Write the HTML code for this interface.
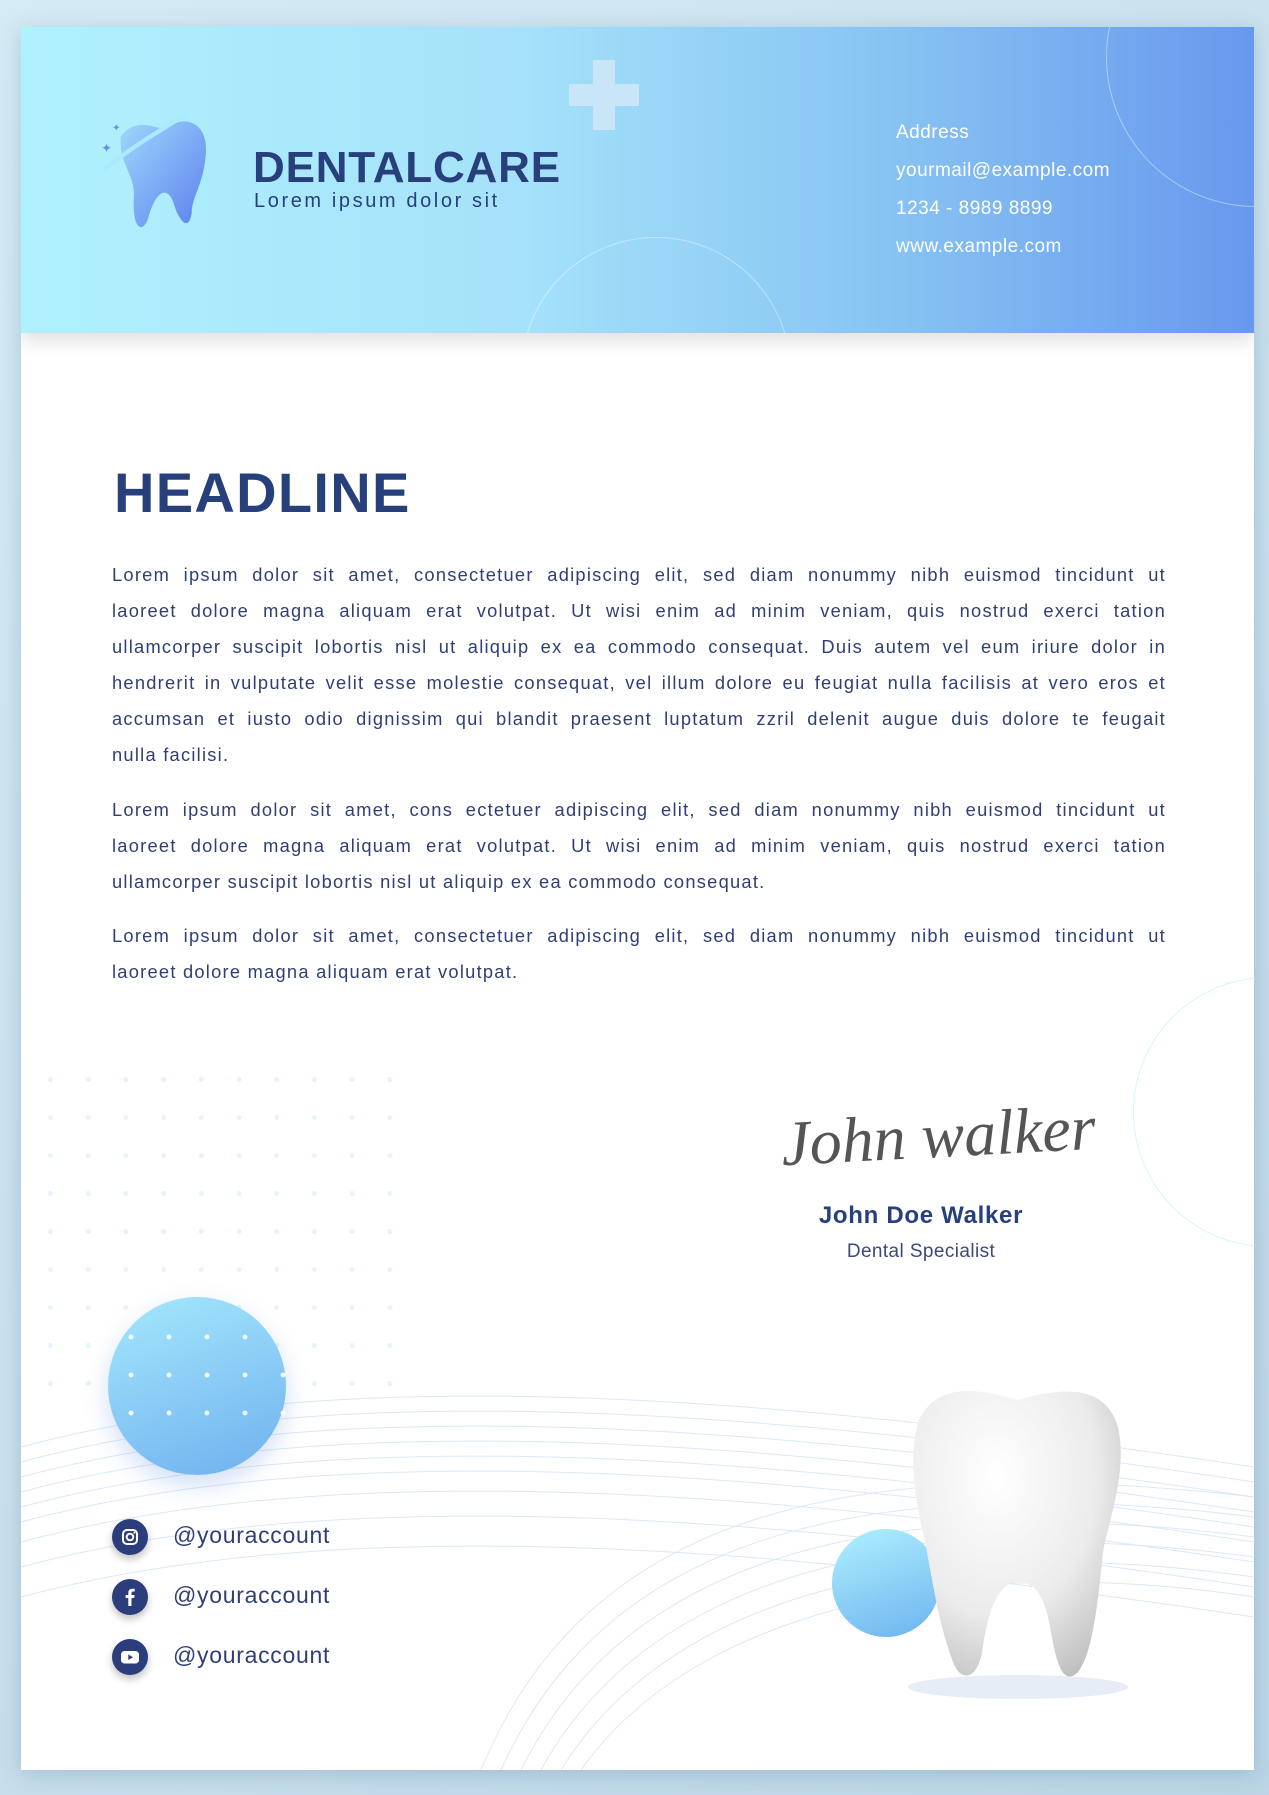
<!DOCTYPE html>
<html><head><meta charset="utf-8"><style>
*{margin:0;padding:0;box-sizing:border-box}
body{width:1269px;height:1795px;background:linear-gradient(135deg,#d5ebf5,#bcd6e6);position:relative;overflow:hidden;font-family:"Liberation Sans",sans-serif;color:#2b3d74}
.page{position:absolute;left:21px;top:27px;width:1233px;height:1743px;background:#fff;box-shadow:0 4px 20px rgba(80,120,160,.3);overflow:hidden}
.hdr{position:absolute;left:0;top:0;width:1233px;height:306px;background:linear-gradient(90deg,#b0f1fe 0%,#a5e2fa 40%,#88c4f2 70%,#6798ee 100%);box-shadow:0 8px 18px rgba(0,0,0,.12);overflow:hidden}
.p{position:absolute;left:91px;width:1054px;font-size:18.3px;line-height:36px;color:#2f3f75;letter-spacing:1.25px}
.p div{text-align:justify;text-align-last:justify;white-space:nowrap}
.p div.l{text-align-last:left}
.contact{position:absolute;left:875px;top:87px;color:#fff;font-size:19px;line-height:38px;letter-spacing:.5px}
.soc{position:absolute;left:91px;width:36px;height:36px;border-radius:50%;background:#2b3d7a;box-shadow:0 4px 8px rgba(0,0,0,.25)}
.st{position:absolute;left:152px;font-size:23px;color:#2f3f75;letter-spacing:.7px}
</style></head><body>
<div class="page">
<svg style="position:absolute;left:0;top:1300px" width="1233" height="443" viewBox="0 0 1233 443">
<g fill="none" stroke="#dce8f6" stroke-width="1">
<path d="M0 120 C300 40 700 60 1233 140"/><path d="M0 135 C300 55 700 75 1233 155"/><path d="M0 150 C300 70 700 90 1233 170"/><path d="M0 165 C300 85 700 105 1233 185"/><path d="M0 180 C300 100 700 120 1233 200"/><path d="M0 195 C300 115 700 135 1233 215"/><path d="M0 215 C300 135 700 155 1233 235"/><path d="M0 240 C300 160 700 180 1233 260"/><path d="M0 270 C300 190 700 210 1233 290"/>
<path d="M460 443 C560 200 800 120 1233 170"/><path d="M480 443 C580 220 820 140 1233 190"/><path d="M500 443 C600 240 840 160 1233 210"/><path d="M520 443 C620 260 860 180 1233 230"/><path d="M540 443 C640 280 880 200 1233 250"/><path d="M560 443 C660 300 900 220 1233 270"/>
</g></svg>
<div class="hdr">
<div style="position:absolute;left:548px;top:57px;width:70px;height:22px;background:#c8e6f8"></div>
<div style="position:absolute;left:572px;top:33px;width:22px;height:70px;background:#c8e6f8"></div>
<div style="position:absolute;left:500px;top:210px;width:270px;height:270px;border-radius:50%;border:1px solid rgba(255,255,255,.4)"></div>
<div style="position:absolute;left:1085px;top:-120px;width:300px;height:300px;border-radius:50%;border:1px solid rgba(255,255,255,.4)"></div>
<svg style="position:absolute;left:78px;top:80px" width="120" height="135" viewBox="0 0 110 120">
<defs><linearGradient id="tg" x1="0" y1="0" x2="1" y2="1"><stop offset="0" stop-color="#9ed8fb"/><stop offset="1" stop-color="#5d80ef"/></linearGradient></defs>
<path d="M20 25 C35 5 55 20 62 18 C75 5 100 10 98 40 C96 70 85 80 85 95 C82 115 72 100 68 85 C62 70 52 75 45 100 C40 115 30 110 32 80 C33 60 18 50 20 25Z" fill="url(#tg)"/>
<path d="M5 55 C30 35 55 20 80 5" stroke="#a9eafd" stroke-width="4" fill="none"/>
<text x="2" y="40" fill="#6a8fe8" font-size="12">✦</text><text x="12" y="20" fill="#6a8fe8" font-size="9">✦</text>
</svg>
<div style="position:absolute;left:232px;top:116px;font-size:44px;font-weight:bold;color:#27407c;letter-spacing:.8px">DENTALCARE</div>
<div style="position:absolute;left:233px;top:163px;font-size:20px;color:#27407c;letter-spacing:2.6px">Lorem ipsum dolor sit</div>
<div class="contact">Address<br>yourmail@example.com<br>1234 - 8989 8899<br>www.example.com</div>
</div>
<div style="position:absolute;left:93px;top:433px;font-size:56px;font-weight:bold;color:#27407c;letter-spacing:1.3px">HEADLINE</div>
<div class="p" style="top:530px">
<div>Lorem ipsum dolor sit amet, consectetuer adipiscing elit, sed diam nonummy nibh euismod tincidunt ut</div>
<div>laoreet dolore magna aliquam erat volutpat. Ut wisi enim ad minim veniam, quis nostrud exerci tation</div>
<div>ullamcorper suscipit lobortis nisl ut aliquip ex ea commodo consequat. Duis autem vel eum iriure dolor in</div>
<div>hendrerit in vulputate velit esse molestie consequat, vel illum dolore eu feugiat nulla facilisis at vero eros et</div>
<div>accumsan et iusto odio dignissim qui blandit praesent luptatum zzril delenit augue duis dolore te feugait</div>
<div class="l">nulla facilisi.</div></div>
<div class="p" style="top:765px">
<div>Lorem ipsum dolor sit amet, cons ectetuer adipiscing elit, sed diam nonummy nibh euismod tincidunt ut</div>
<div>laoreet dolore magna aliquam erat volutpat. Ut wisi enim ad minim veniam, quis nostrud exerci tation</div>
<div class="l">ullamcorper suscipit lobortis nisl ut aliquip ex ea commodo consequat.</div></div>
<div class="p" style="top:891px">
<div>Lorem ipsum dolor sit amet, consectetuer adipiscing elit, sed diam nonummy nibh euismod tincidunt ut</div>
<div class="l">laoreet dolore magna aliquam erat volutpat.</div></div>
<div style="position:absolute;left:1112px;top:950px;width:270px;height:270px;border-radius:50%;border:1.5px solid #d8f4fa"></div>
<svg style="position:absolute;left:0;top:1040px" width="420" height="360">
<defs><pattern id="d" x="27" y="10" width="37.7" height="38" patternUnits="userSpaceOnUse"><circle cx="2.5" cy="2.5" r="2.5" fill="#e6f3f8"/></pattern></defs>
<rect x="20" y="0" width="380" height="350" fill="url(#d)"/></svg>
<div style="position:absolute;left:87px;top:1270px;width:178px;height:178px;border-radius:50%;background:linear-gradient(160deg,#a5e8fc,#6fb0ef);box-shadow:0 10px 25px rgba(100,150,230,.3)"></div>
<svg style="position:absolute;left:87px;top:1270px" width="178" height="178"><g fill="#fff" opacity=".85">
<circle cx="23" cy="40" r="2.5"/><circle cx="61" cy="40" r="2.5"/><circle cx="99" cy="40" r="2.5"/><circle cx="137" cy="40" r="2.5"/>
<circle cx="23" cy="78" r="2.5"/><circle cx="61" cy="78" r="2.5"/><circle cx="99" cy="78" r="2.5"/><circle cx="137" cy="78" r="2.5"/><circle cx="175" cy="78" r="2.5"/>
<circle cx="23" cy="116" r="2.5"/><circle cx="61" cy="116" r="2.5"/><circle cx="99" cy="116" r="2.5"/><circle cx="137" cy="116" r="2.5"/><circle cx="175" cy="116" r="2.5"/></g></svg>
<div style="position:absolute;left:760px;top:1072px;font-family:'Liberation Serif',serif;font-style:italic;font-size:64px;color:#555;transform:rotate(-3deg)">John walker</div>
<div style="position:absolute;left:700px;top:1175px;width:400px;text-align:center;font-size:24px;font-weight:bold;color:#27407c;letter-spacing:.7px">John Doe Walker</div>
<div style="position:absolute;left:700px;top:1214px;width:400px;text-align:center;font-size:19px;color:#3b4a78;letter-spacing:.4px">Dental Specialist</div>
<div style="position:absolute;left:811px;top:1502px;width:108px;height:108px;border-radius:50%;background:linear-gradient(160deg,#b0f1fe,#6cb3ef)"></div>
<svg style="position:absolute;left:862px;top:1355px" width="270" height="330" viewBox="0 0 260 330">
<defs><radialGradient id="th" cx=".4" cy=".3" r=".8"><stop offset="0" stop-color="#fff"/><stop offset=".6" stop-color="#ececec"/><stop offset="1" stop-color="#bdbdbd"/></radialGradient></defs>
<ellipse cx="130" cy="305" rx="110" ry="12" fill="#e6edf6"/>
<path d="M30 40 C50 -5 100 10 130 18 C160 10 215 -5 230 45 C240 90 220 140 215 170 C210 220 205 270 190 290 C175 305 168 280 163 250 C158 220 150 200 130 200 C110 200 100 230 95 265 C90 300 72 300 65 280 C50 240 45 200 37 160 C28 120 20 80 30 40Z" fill="url(#th)"/>
</svg>
<div class="soc" style="top:1492px"><svg width="36" height="36"><rect x="11" y="11" width="14" height="14" rx="4" fill="none" stroke="#fff" stroke-width="2"/><circle cx="18" cy="18" r="3.3" fill="none" stroke="#fff" stroke-width="2"/><circle cx="22.3" cy="13.7" r="1" fill="#fff"/></svg></div>
<div class="soc" style="top:1552px"><svg width="36" height="36"><path d="M19.5 27v-8h2.7l.4-3h-3.1v-2c0-.9.3-1.5 1.5-1.5h1.7v-2.7c-.3 0-1.3-.1-2.4-.1-2.4 0-4 1.4-4 4.1V16h-2.7v3h2.7v8z" fill="#fff"/></svg></div>
<div class="soc" style="top:1612px"><svg width="36" height="36"><rect x="9" y="12" width="18" height="12.5" rx="3.5" fill="#fff"/><path d="M16.3 15.4v5.6l4.7-2.8z" fill="#2b3d7a"/></svg></div>
<div class="st" style="top:1495px">@youraccount</div>
<div class="st" style="top:1555px">@youraccount</div>
<div class="st" style="top:1615px">@youraccount</div>
</div>
</body></html>
